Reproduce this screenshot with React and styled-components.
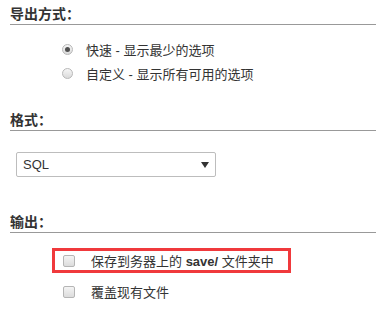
import React from "react";
import styled, { createGlobalStyle } from "styled-components";

const Global = createGlobalStyle`
  html, body { margin: 0; padding: 0; background: #fff; }
  body {
    font-family: "Liberation Sans", "Noto Sans CJK SC", sans-serif;
    color: #333;
    font-size: 13px;
  }
`;

const Page = styled.div`
  width: 384px;
  height: 333px;
  box-sizing: border-box;
  padding: 4px 8px 0 10px;
  overflow: hidden;
`;

const Section = styled.section`
  margin-top: ${(p) => p.$top || 0}px;
`;

const Title = styled.h3`
  margin: 0;
  font-size: 14px;
  font-weight: bold;
  line-height: 20px;
  height: 20px;
  color: #333;
  border-bottom: 1px solid #999;
`;

const OptionList = styled.div`
  display: flex;
  flex-direction: column;
  align-items: flex-start;
  margin-top: ${(p) => p.$top || 0}px;
  padding-left: ${(p) => p.$left || 0}px;
  gap: ${(p) => p.$gap || 0}px;
`;

const RadioRow = styled.label`
  display: flex;
  align-items: center;
  height: 24px;
  gap: 13px;
  font-size: 13px;
  color: #333;
`;

const Radio = styled.span`
  width: 11px;
  height: 11px;
  box-sizing: border-box;
  border-radius: 50%;
  border: 1px solid #b8b8b8;
  background: linear-gradient(#f6f6f6, #dadada);
  display: flex;
  align-items: center;
  justify-content: center;
  &::after {
    content: "";
    width: 5px;
    height: 5px;
    border-radius: 50%;
    background: ${(p) => (p.$checked ? "#505050" : "transparent")};
  }
`;

const CheckRow = styled.label`
  display: flex;
  align-items: center;
  height: 19px;
  padding: 0 14px 0 8px;
  gap: 16px;
  border: 3px solid ${(p) => (p.$highlight ? "#f0393c" : "transparent")};
  font-size: 13px;
  color: #333;
`;

const Checkbox = styled.span`
  width: 12px;
  height: 12px;
  box-sizing: border-box;
  border-radius: 2px;
  border: 1px solid #b5b5b5;
  background: linear-gradient(#f4f4f4, #dcdcdc);
`;

const Strong = styled.b`
  font-weight: bold;
  color: #333;
`;

const Select = styled.div`
  margin: 21px 0 0 6px;
  width: 200px;
  height: 25px;
  box-sizing: border-box;
  border: 1px solid #bdbdbd;
  border-radius: 2px;
  display: flex;
  align-items: center;
  justify-content: space-between;
  padding: 0 6px 0 6px;
  font-size: 13px;
  color: #333;
  background: #fff;
`;

const Arrow = () => (
  <svg width="8" height="6" viewBox="0 0 8 6">
    <path d="M0 0 L8 0 L4 6 Z" fill="#333" />
  </svg>
);

export default function App() {
  return (
    <>
      <Global />
      <Page>
        <Section>
          <Title>导出方式：</Title>
          <OptionList $top={12} $left={52}>
            <RadioRow>
              <Radio $checked />
              快速 - 显示最少的选项
            </RadioRow>
            <RadioRow>
              <Radio />
              自定义 - 显示所有可用的选项
            </RadioRow>
          </OptionList>
        </Section>
        <Section $top={25}>
          <Title>格式：</Title>
          <Select>
            <span>SQL</span>
            <Arrow />
          </Select>
        </Section>
        <Section $top={35}>
          <Title>输出：</Title>
          <OptionList $top={15} $left={42} $gap={6}>
            <CheckRow $highlight>
              <Checkbox />
              <span>
                保存到务器上的 <Strong>save/</Strong> 文件夹中
              </span>
            </CheckRow>
            <CheckRow>
              <Checkbox />
              覆盖现有文件
            </CheckRow>
          </OptionList>
        </Section>
      </Page>
    </>
  );
}
